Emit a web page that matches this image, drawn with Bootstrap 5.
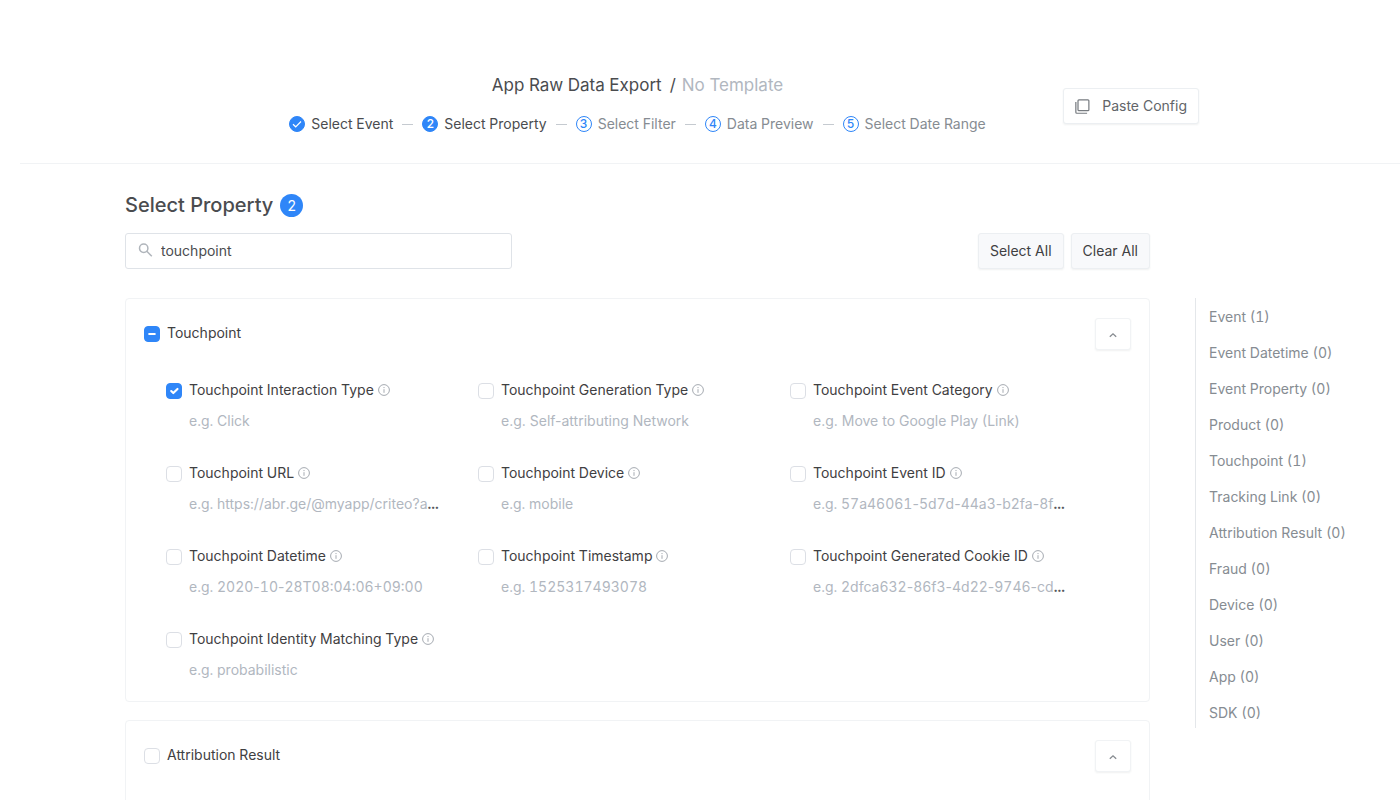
<!DOCTYPE html>
<html lang="en">
<head>
<meta charset="utf-8">
<meta name="viewport" content="width=device-width, initial-scale=1">
<title>App Raw Data Export</title>
<link href="https://cdn.jsdelivr.net/npm/bootstrap@5.3.0/dist/css/bootstrap.min.css" rel="stylesheet">
<style>
  :root { --blue: #2f86f8; --ink: #3f4042; --mid: #868c92; --pale: #b1b7bf; --line: #f1f3f5; }
  body { font-family: Inter, "Liberation Sans", sans-serif; font-size: 14px; line-height: 24px; font-variant-numeric: tabular-nums; color: var(--ink); }
  .export-head { margin-left: 20px; padding: 71px 201px 27px 56px; border-bottom: 1px solid var(--line); }
  .head-grid { display: grid; grid-template-columns: 136px 1fr 136px; }
  .export-title { font-size: 17px; line-height: 28px; margin: 0 0 13px; font-weight: 400; color: #4a4c4f; }
  .slash { margin: 0 6px 0 8px; }
  .pale { color: var(--pale); }
  .steps { margin: 0 -80px; color: var(--mid); }
  .steps .reached { color: #4a4c4f; }
  .step-num { width: 16px; height: 16px; border: 1px solid var(--blue); border-radius: 50%; color: var(--blue); font-size: 12px; line-height: 14px; font-weight: 500; text-align: center; margin-right: 6px; flex: none; }
  .step-num.full { background: var(--blue); color: #fff; }
  .step-num svg { display: block; }
  .dash { width: 11px; height: 1px; background: #c5cad0; margin: 0 9px; }
  .btn-plain { --bs-btn-font-size: 14px; --bs-btn-line-height: 24px; --bs-btn-padding-x: 11px; --bs-btn-padding-y: 5px; --bs-btn-bg: #fff; --bs-btn-color: #626569; --bs-btn-border-color: #eceff2; --bs-btn-border-radius: 3px; --bs-btn-hover-bg: #f4f6f8; --bs-btn-hover-border-color: #e0e4e8; box-shadow: 0 1px 2px rgba(40,50,60,.07); white-space: nowrap; }
  .btn-tint { --bs-btn-bg: #f8f9fb; --bs-btn-color: var(--ink); }
  .paste { margin-top: 17px; }
  .page-grid { display: grid; grid-template-columns: minmax(0, 1fr) 205px; column-gap: 45px; padding: 27px 0 0 125px; }
  .wide { grid-column: 1; }
  .heading-row { gap: 7px; margin-bottom: 14px; }
  .section-title { font-size: 20px; line-height: 28px; font-weight: 500; margin: 0; color: #4a4c4f; }
  .count { width: 23px; height: 23px; line-height: 23px; border-radius: 50%; background: var(--blue); color: #fff; text-align: center; font-size: 14px; }
  .tools { margin-bottom: 29px; }
  .tool-buttons { gap: 7px; }
  .search { width: 387px; height: 36px; border: 1px solid #dfe3e8; border-radius: 3px; padding: 0 12px; }
  .search input { border: 0; outline: 0; padding: 0; color: #4a4c4f; background: none; }
  .lists { gap: 18px; }
  .panel { border: 1px solid var(--line); border-radius: 4px; padding: 19px 18px; }
  .panel + .panel { min-height: 120px; }
  .panel .form-check-input { width: 16px; height: 16px; margin: 1px 0 0; border-color: #dcdfe5; border-radius: 4px; flex: none; }
  .panel .form-check-input:checked, .panel .form-check-input:indeterminate { background-color: var(--blue); border-color: var(--blue); }
  .group-name { gap: 7px; padding-bottom: 2px; }
  .toggle { width: 36px; height: 32px; padding: 0; --bs-btn-border-color: #f1f3f5; }
  .props { display: grid; grid-template-columns: repeat(3, minmax(0, 1fr)); row-gap: 28px; padding: 28px 29px 0 22px; }
  .prop-name { white-space: nowrap; }
  .prop-name label { margin-left: 7px; }
  .gap-info { margin-left: 4px; }
  .example { margin: 7px 0 0 23px; white-space: nowrap; color: #55585c; }
  .hy { font-variant-numeric: normal; }
  .toc { border-left: 1px solid #e4e7ea; padding: 7px 0 3px 13px; align-self: start; row-gap: 12px; }
  .toc a { color: var(--mid); text-decoration: none; }
</style>
</head>
<body>
<svg class="d-none">
  <symbol id="info" viewBox="0 0 12 12"><circle cx="6" cy="6" r="5.4" fill="none" stroke="#a5aab1"/><path d="M6 5.2v3.6M6 3v1.1" stroke="#a5aab1"/></symbol>
  <symbol id="up" viewBox="0 0 8 6"><path d="M.8 4.8 4 1.8l3.2 3" fill="none" stroke="#868b90" stroke-width="1.3"/></symbol>
</svg>

<header class="export-head">
  <div class="head-grid">
    <span></span>
    <div>
      <h1 class="export-title text-center">App Raw Data Export<span class="slash">/</span><span class="pale">No Template</span></h1>
      <div class="steps d-flex align-items-center justify-content-center text-nowrap">
        <span class="step-num full"><svg width="14" height="14" viewBox="0 0 14 14"><path d="m3 7.2 2.7 2.6L11 4.5" fill="none" stroke="#fff" stroke-width="1.2"/></svg></span><span class="reached">Select Event</span>
        <span class="dash"></span>
        <span class="step-num full">2</span><span class="reached">Select Property</span>
        <span class="dash"></span>
        <span class="step-num">3</span><span>Select Filter</span>
        <span class="dash"></span>
        <span class="step-num">4</span><span>Data Preview</span>
        <span class="dash"></span>
        <span class="step-num">5</span><span>Select Date Range</span>
      </div>
    </div>
    <div>
      <button type="button" class="btn btn-plain paste w-100 d-flex align-items-center justify-content-between">
        <svg width="15" height="15" viewBox="0 0 16 16" fill="none" stroke="#777b80" stroke-width="1.3"><rect x="3.2" y=".9" width="11.6" height="11.6" rx="1"/><path d="M.9 3.2v11a1 1 0 0 0 1 1h11"/></svg>
        Paste Config
      </button>
    </div>
  </div>
</header>

<main class="page-grid">
  <div class="wide d-flex align-items-center heading-row">
    <h2 class="section-title">Select Property</h2>
    <span class="count">2</span>
  </div>
  <div class="wide d-flex justify-content-between tools">
    <label class="search d-flex align-items-center">
      <svg class="me-2" width="15" height="17" viewBox="0 0 15 17" fill="none" stroke="#b0b5bb" stroke-width="1.5"><circle cx="5.7" cy="5.2" r="4.2"/><path d="m8.8 8.3 5 5"/></svg>
      <input type="text" class="flex-grow-1" value="touchpoint" aria-label="Search properties">
    </label>
    <div class="d-flex tool-buttons">
      <button type="button" class="btn btn-plain btn-tint">Select All</button>
      <button type="button" class="btn btn-plain btn-tint">Clear All</button>
    </div>
  </div>

  <div class="wide d-flex flex-column lists">
    <section class="panel">
      <div class="d-flex justify-content-between">
        <div class="d-flex align-items-center group-name">
          <input class="form-check-input" type="checkbox" id="g1"><label for="g1">Touchpoint</label>
        </div>
        <button type="button" class="btn btn-plain toggle" aria-label="Collapse Touchpoint"><svg width="8" height="6"><use href="#up"/></svg></button>
      </div>
      <div class="props">
        <div><div class="prop-name d-flex align-items-center"><input class="form-check-input" type="checkbox" id="p1" checked><label for="p1">Touchpoint Interaction Type</label><svg class="gap-info" width="12" height="12"><use href="#info"/></svg></div>
          <div class="example"><span class="pale">e.g. Click</span></div></div>
        <div><div class="prop-name d-flex align-items-center"><input class="form-check-input" type="checkbox" id="p2"><label for="p2">Touchpoint Generation Type</label><svg class="gap-info" width="12" height="12"><use href="#info"/></svg></div>
          <div class="example"><span class="pale hy">e.g. Self-attributing Network</span></div></div>
        <div><div class="prop-name d-flex align-items-center"><input class="form-check-input" type="checkbox" id="p3"><label for="p3">Touchpoint Event Category</label><svg class="gap-info" width="12" height="12"><use href="#info"/></svg></div>
          <div class="example"><span class="pale hy">e.g. Move to Google Play (Link)</span></div></div>
        <div><div class="prop-name d-flex align-items-center"><input class="form-check-input" type="checkbox" id="p4"><label for="p4">Touchpoint URL</label><svg class="gap-info" width="12" height="12"><use href="#info"/></svg></div>
          <div class="example"><span class="pale">e.g. https://abr.ge/@myapp/criteo?a</span><b>...</b></div></div>
        <div><div class="prop-name d-flex align-items-center"><input class="form-check-input" type="checkbox" id="p5"><label for="p5">Touchpoint Device</label><svg class="gap-info" width="12" height="12"><use href="#info"/></svg></div>
          <div class="example"><span class="pale">e.g. mobile</span></div></div>
        <div><div class="prop-name d-flex align-items-center"><input class="form-check-input" type="checkbox" id="p6"><label for="p6">Touchpoint Event ID</label><svg class="gap-info" width="12" height="12"><use href="#info"/></svg></div>
          <div class="example"><span class="pale">e.g. 57a46061<span class="hy">-</span>5d7d<span class="hy">-</span>44a3<span class="hy">-</span>b2fa<span class="hy">-</span>8f</span><b>...</b></div></div>
        <div><div class="prop-name d-flex align-items-center"><input class="form-check-input" type="checkbox" id="p7"><label for="p7">Touchpoint Datetime</label><svg class="gap-info" width="12" height="12"><use href="#info"/></svg></div>
          <div class="example"><span class="pale">e.g. 2020<span class="hy">-</span>10<span class="hy">-</span>28T08:04:06+09:00</span></div></div>
        <div><div class="prop-name d-flex align-items-center"><input class="form-check-input" type="checkbox" id="p8"><label for="p8">Touchpoint Timestamp</label><svg class="gap-info" width="12" height="12"><use href="#info"/></svg></div>
          <div class="example"><span class="pale">e.g. 1525317493078</span></div></div>
        <div><div class="prop-name d-flex align-items-center"><input class="form-check-input" type="checkbox" id="p9"><label for="p9">Touchpoint Generated Cookie ID</label><svg class="gap-info" width="12" height="12"><use href="#info"/></svg></div>
          <div class="example"><span class="pale">e.g. 2dfca632<span class="hy">-</span>86f3<span class="hy">-</span>4d22<span class="hy">-</span>9746<span class="hy">-</span>cd</span><b>...</b></div></div>
        <div><div class="prop-name d-flex align-items-center"><input class="form-check-input" type="checkbox" id="p10"><label for="p10">Touchpoint Identity Matching Type</label><svg class="gap-info" width="12" height="12"><use href="#info"/></svg></div>
          <div class="example"><span class="pale">e.g. probabilistic</span></div></div>
      </div>
    </section>
    <section class="panel">
      <div class="d-flex justify-content-between">
        <div class="d-flex align-items-center group-name">
          <input class="form-check-input" type="checkbox" id="g2"><label for="g2">Attribution Result</label>
        </div>
        <button type="button" class="btn btn-plain toggle" aria-label="Collapse Attribution Result"><svg width="8" height="6"><use href="#up"/></svg></button>
      </div>
    </section>
  </div>

  <nav class="toc d-flex flex-column" aria-label="Property groups">
    <a href="#">Event (1)</a><a href="#">Event Datetime (0)</a><a href="#">Event Property (0)</a><a href="#">Product (0)</a><a href="#">Touchpoint (1)</a><a href="#">Tracking Link (0)</a><a href="#">Attribution Result (0)</a><a href="#">Fraud (0)</a><a href="#">Device (0)</a><a href="#">User (0)</a><a href="#">App (0)</a><a href="#">SDK (0)</a>
  </nav>
</main>
<script src="https://cdn.jsdelivr.net/npm/bootstrap@5.3.0/dist/js/bootstrap.bundle.min.js"></script>
<script>document.getElementById('g1').indeterminate = true;</script>
</body>
</html>
